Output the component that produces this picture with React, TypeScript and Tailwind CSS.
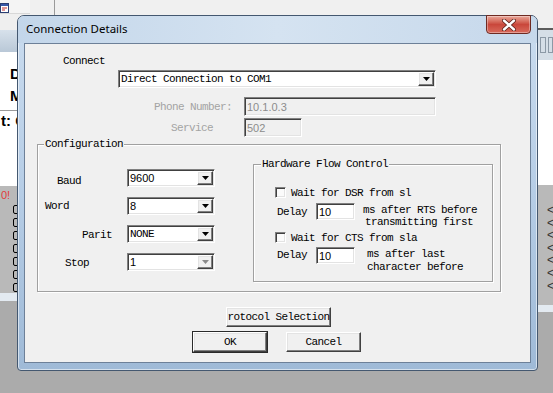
import React from "react";

const sunken =
  "border border-t-[#808080] border-l-[#808080] border-b-white border-r-white shadow-[inset_1px_1px_0_#404040,inset_-1px_-1px_0_#e3e3e3]";
const raised =
  "border border-t-white border-l-white border-b-[#404040] border-r-[#404040] shadow-[inset_-1px_-1px_0_#808080,inset_1px_1px_0_#e3e3e3]";
const sans = "font-['Liberation_Sans',Arial,sans-serif] tracking-normal";

function DropBtn({ dim = false }: { dim?: boolean }) {
  return (
    <div className={`w-[16px] h-[14px] bg-[#f0f0f0] flex items-center justify-center ${raised}`}>
      <svg width="7" height="4" viewBox="0 0 7 4">
        <path d="M0 0H7L3.5 4Z" fill={dim ? "#8a8a8a" : "#000"} />
      </svg>
    </div>
  );
}

function Combo({ value, w, mono = false, dim = false }: { value: string; w: string; mono?: boolean; dim?: boolean }) {
  return (
    <div className={`${w} h-[18px] shrink-0 bg-white flex items-center justify-between pl-[2px] pr-[1px] ${sunken}`}>
      <span className={mono ? "" : `${sans} text-[11px]`}>{value}</span>
      <DropBtn dim={dim} />
    </div>
  );
}

function Field({ value, w, h, disabled = false }: { value: string; w: string; h: string; disabled?: boolean }) {
  return (
    <div
      className={`${w} ${h} shrink-0 ${disabled ? "bg-[#f0f0f0] text-[#8c8c8c]" : "bg-white text-black"} flex items-center pl-[2px] ${sans} text-[11px] ${sunken}`}
    >
      {value}
    </div>
  );
}

function Check() {
  return <div className={`w-[11px] h-[11px] shrink-0 bg-[#fbfbfb] ${sunken}`} />;
}

function Btn({ label, w, strong = false }: { label: string; w: string; strong?: boolean }) {
  return (
    <div
      className={`${w} h-[20px] bg-[#f0f0f0] flex items-center justify-center whitespace-nowrap ${raised} ${strong ? "outline outline-1 outline-[#2a2a2a]" : ""}`}
    >
      {label}
    </div>
  );
}

export default function App() {
  return (
    <div className="relative w-[553px] h-[393px] overflow-hidden bg-[#ababab] text-black font-['Liberation_Mono',monospace] text-[11px] tracking-[-0.6px] leading-[12px]">
      {/* app behind the dialog */}
      <div className="flex h-full">
        <div className="w-[30px] flex flex-col">
          <div className="h-[13px] bg-[#f4f4f4] flex items-start pt-[3px]">
            <svg width="9" height="10" viewBox="0 0 9 10">
              <rect x="0.5" y="0.5" width="8" height="9" fill="#fff" stroke="#2b3f73" />
              <rect x="1" y="1" width="7" height="2" fill="#3557a8" />
              <path d="M2 5h5M2 7h3" stroke="#c03030" />
            </svg>
          </div>
          <div className="h-[17px] bg-[#efefef] border-t border-[#d8d8d8]" />
          <div className="h-[22px] bg-gradient-to-b from-[#d7e1eb] to-[#b9c8d7]" />
          <div className="h-[134px] bg-white font-['Liberation_Sans',sans-serif] font-bold text-[15px] tracking-normal">
            <div className="pl-[10px] pt-[14px] leading-[16px]">D</div>
            <div className="pl-[10px] pt-[6px] leading-[16px]">M</div>
            <div className="mt-[6px] border-t border-[#9a9a9a] leading-[16px] pl-px pt-[2px] whitespace-nowrap">t: C</div>
          </div>
          <div className="h-[107px] bg-[#b9b9b9]">
            <div className="pl-px pt-[3px] text-[#e23a3a] font-['Liberation_Sans',sans-serif] text-[11px] tracking-normal">
              0!
            </div>
            <div className="flex flex-col gap-[4px] pl-[13px] pt-[4px]">
              {[0, 1, 2, 3, 4, 5, 6].map((i) => (
                <div key={i} className="w-[8px] h-[9px] border border-black rounded-[2px]" />
              ))}
            </div>
          </div>
          <div className="h-[8px] bg-[#e3eaf1]" />
          <div className="flex-1 bg-[#ababab]" />
        </div>
        <div className="flex-1 flex flex-col">
          <div className="h-[15px] bg-[#f0f0f0] flex">
            <div className="ml-[24px] w-px bg-[#9a9a9a]" />
          </div>
          <div className="flex-1 bg-[#ababab]" />
        </div>
        <div className="w-[20px] flex flex-col">
          <div className="h-[28px] bg-[#f0f0f0]" />
          <div className="h-[2px] bg-[#5c5c5c]" />
          <div className="h-[30px] bg-[#d5dee7] flex items-center gap-[2px] pl-[7px]">
            <div className="w-[6px] h-[16px] border border-[#8c99a6]" />
            <div className="w-[6px] h-[16px] border border-[#8c99a6]" />
          </div>
          <div className="h-[125px] bg-white" />
          <div className="h-[120px] bg-[#b9b9b9] flex flex-col pt-[19px] pl-[14px] font-['Liberation_Sans',sans-serif] text-[12px] leading-[12.6px] text-[#333]">
            {[0, 1, 2, 3, 4, 5, 6].map((i) => (
              <div key={i}>&lt;</div>
            ))}
          </div>
          <div className="h-[7px] bg-[#e3eaf1]" />
          <div className="flex-1 bg-[#ababab]" />
        </div>
      </div>

      {/* Connection Details dialog */}
      <div className="absolute left-[17px] top-[15px] w-[521px] h-[356px] flex flex-col rounded-t-[7px] rounded-b-[4px] border border-[#445870] bg-gradient-to-b from-[#cadcef] via-[#b6cde6] to-[#9fbad7] shadow-[inset_0_0_0_1px_rgba(255,255,255,0.55)]">
        <div className="h-[27px] shrink-0 flex items-center pl-[8px] pb-[2px] font-['Noto_Sans',sans-serif] text-[11.5px] tracking-normal bg-gradient-to-r from-[#c3d6ea] via-[#d5e3f1] to-[#c6d8eb] rounded-t-[6px]">
          Connection Details
        </div>
        <div className="absolute -top-[1px] right-[6px] w-[45px] h-[19px] rounded-b-[4px] border border-[#6e2a22] bg-gradient-to-b from-[#e9a89b] via-[#c9473b] to-[#d86a5c] flex items-center justify-center shadow-[inset_0_0_0_1px_rgba(255,255,255,0.35)]">
          <svg width="14" height="12" viewBox="0 0 14 12">
            <path d="M2 1.5L12 10.5M12 1.5L2 10.5" stroke="#5a1f18" strokeWidth="4" strokeLinecap="round" />
            <path d="M2 1.5L12 10.5M12 1.5L2 10.5" stroke="#fff" strokeWidth="2.4" strokeLinecap="round" />
          </svg>
        </div>

        <div className="h-[320px] shrink-0 mx-[6px] border border-[#6d8098] bg-[#f0f0f0] flex flex-col overflow-hidden">
          <div className="pl-[38px] pt-[11px] h-[23px] shrink-0">Connect</div>
          <div className="pl-[93px] mt-[3px] shrink-0">
            <Combo value="Direct Connection to COM1" w="w-[318px]" mono />
          </div>

          <div className="flex mt-[9px] items-center h-[19px] shrink-0">
            <div className="w-[219px] text-right pr-[12px] text-[#a3a3a3]">Phone Number:</div>
            <Field value="10.1.0.3" w="w-[192px]" h="h-[19px]" disabled />
          </div>
          <div className="flex mt-[2px] items-center h-[19px] shrink-0">
            <div className="w-[219px] text-right pr-[31px] text-[#a3a3a3]">Service</div>
            <Field value="502" w="w-[58px]" h="h-[19px]" disabled />
          </div>

          {/* Configuration */}
          <div className="relative shrink-0 ml-[12px] mt-[7px] w-[464px] h-[148px] border border-[#a0a0a0] shadow-[1px_1px_0_#fff,inset_1px_1px_0_#fff] flex">
            <span className="absolute -top-[7px] left-[6px] bg-[#f0f0f0] px-px">Configuration</span>
            <div className="w-[215px] pt-[24px] flex flex-col gap-[10px]">
              <div className="flex items-center h-[18px]">
                <div className="w-[89px] pl-[19px] pt-[5px]">Baud</div>
                <Combo value="9600" w="w-[88px]" />
              </div>
              <div className="flex items-center h-[18px]">
                <div className="w-[89px] pl-[7px]">Word</div>
                <Combo value="8" w="w-[88px]" />
              </div>
              <div className="flex items-center h-[18px]">
                <div className="w-[89px] pl-[44px] pt-[2px]">Parit</div>
                <Combo value="NONE" w="w-[88px]" mono />
              </div>
              <div className="flex items-center h-[18px]">
                <div className="w-[89px] pl-[27px] pt-[2px]">Stop</div>
                <Combo value="1" w="w-[88px]" dim />
              </div>
            </div>

            {/* Hardware Flow Control */}
            <div className="relative mt-[19px] w-[240px] h-[118px] border border-[#a0a0a0] shadow-[1px_1px_0_#fff,inset_1px_1px_0_#fff] pl-[21px] pt-[22px] flex flex-col">
              <span className="absolute -top-[7px] left-[7px] bg-[#f0f0f0] px-px">Hardware Flow Control</span>
              <div className="flex items-center h-[11px]">
                <Check />
                <span className="ml-[5px]">Wait for DSR from sl</span>
              </div>
              <div className="flex items-start h-[24px] mt-[5px]">
                <div className="w-[41px] pl-[2px] pt-[3px]">Delay</div>
                <Field value="10" w="w-[39px]" h="h-[17px]" />
                <div className="ml-[8px] pt-[1px] leading-[12px]">
                  <div>ms after RTS before</div>
                  <div className="pl-[2px]">transmitting first</div>
                </div>
              </div>
              <div className="flex items-center h-[11px] mt-[5px]">
                <Check />
                <span className="ml-[5px]">Wait for CTS from sla</span>
              </div>
              <div className="flex items-start mt-[4px]">
                <div className="w-[41px] pl-[2px] pt-[2px]">Delay</div>
                <Field value="10" w="w-[39px]" h="h-[17px]" />
                <div className="ml-[12px] pt-[1px] leading-[13px]">
                  <div>ms after last</div>
                  <div>character before</div>
                </div>
              </div>
            </div>
          </div>

          <div className="flex-1" />
          <div className="pl-[201px] shrink-0">
            <Btn label="rotocol Selection" w="w-[105px]" />
          </div>
          <div className="flex mt-[5px] mb-[10px] shrink-0">
            <div className="ml-[168px]">
              <Btn label="OK" w="w-[74px]" strong />
            </div>
            <div className="ml-[19px]">
              <Btn label="Cancel" w="w-[75px]" />
            </div>
          </div>
        </div>
      </div>
    </div>
  );
}
